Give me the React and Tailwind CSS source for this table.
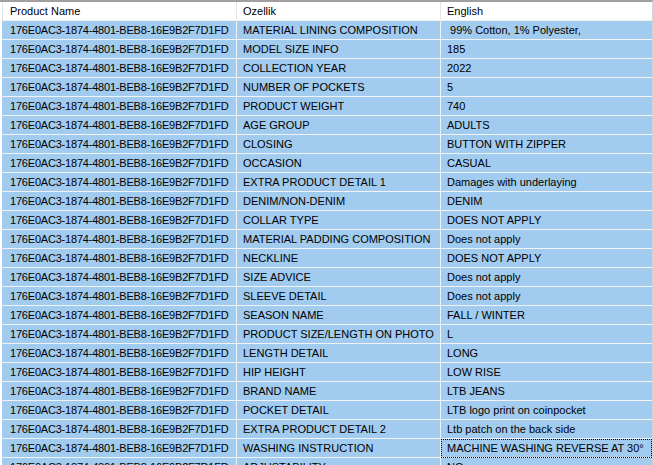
const rows = [
  ["MATERIAL LINING COMPOSITION", " 99% Cotton, 1% Polyester,"],
  ["MODEL SIZE INFO", "185"],
  ["COLLECTION YEAR", "2022"],
  ["NUMBER OF POCKETS", "5"],
  ["PRODUCT WEIGHT", "740"],
  ["AGE GROUP", "ADULTS"],
  ["CLOSING", "BUTTON WITH ZIPPER"],
  ["OCCASION", "CASUAL"],
  ["EXTRA PRODUCT DETAIL 1", "Damages with underlaying"],
  ["DENIM/NON-DENIM", "DENIM"],
  ["COLLAR TYPE", "DOES NOT APPLY"],
  ["MATERIAL PADDING COMPOSITION", "Does not apply"],
  ["NECKLINE", "DOES NOT APPLY"],
  ["SIZE ADVICE", "Does not apply"],
  ["SLEEVE DETAIL", "Does not apply"],
  ["SEASON NAME", "FALL / WINTER"],
  ["PRODUCT SIZE/LENGTH ON PHOTO", "L"],
  ["LENGTH DETAIL", "LONG"],
  ["HIP HEIGHT", "LOW RISE"],
  ["BRAND NAME", "LTB JEANS"],
  ["POCKET DETAIL", "LTB logo print on coinpocket"],
  ["EXTRA PRODUCT DETAIL 2", "Ltb patch on the back side"],
  ["WASHING INSTRUCTION", "MACHINE WASHING REVERSE AT 30°"],
  ["ADJUSTABILITY", "NO"],
];

const ID = "176E0AC3-1874-4801-BEB8-16E9B2F7D1FD";

function App() {
  return (
    <div className="h-[465px] w-[653px] overflow-hidden border-t-2 border-r border-[#a0a0a0] border-r-[#d4d4d4] bg-white font-['Liberation_Sans',Arial,sans-serif] text-[11px] leading-none text-black">
      <div className="flex h-[19px] border-b border-[#f0f0f0] pl-[2px]">
        <div className="flex w-[235px] items-center border-l border-r border-[#e5e5e5] pl-[7px]">
          Product Name
        </div>
        <div className="flex w-[204px] items-center border-r border-[#e5e5e5] pl-[6px]">
          Ozellik
        </div>
        <div className="flex w-[210px] items-center pl-[6px]">English</div>
      </div>
      {rows.map(([key, value], i) => (
        <div key={key} className="flex h-[19px] pl-[2px]">
          <div className="flex w-[235px] items-center border-b border-r border-[#f2f2f2] bg-[#a2cbf0] pl-[8px] tracking-[-0.2px]">
            {ID}
          </div>
          <div className="flex w-[204px] items-center border-b border-r border-[#f2f2f2] bg-[#a2cbf0] pl-[6px]">
            {key}
          </div>
          <div
            className={
              i === 22
                ? "flex w-[211px] items-center whitespace-pre border-b border-[#f2f2f2] bg-[#a2cbf0] pl-[6px] outline-1 -outline-offset-1 outline-dotted outline-black"
                : "flex w-[211px] items-center whitespace-pre border-b border-[#f2f2f2] bg-[#a2cbf0] pl-[6px]"
            }
          >
            {value}
          </div>
        </div>
      ))}
    </div>
  );
}

export default App;
